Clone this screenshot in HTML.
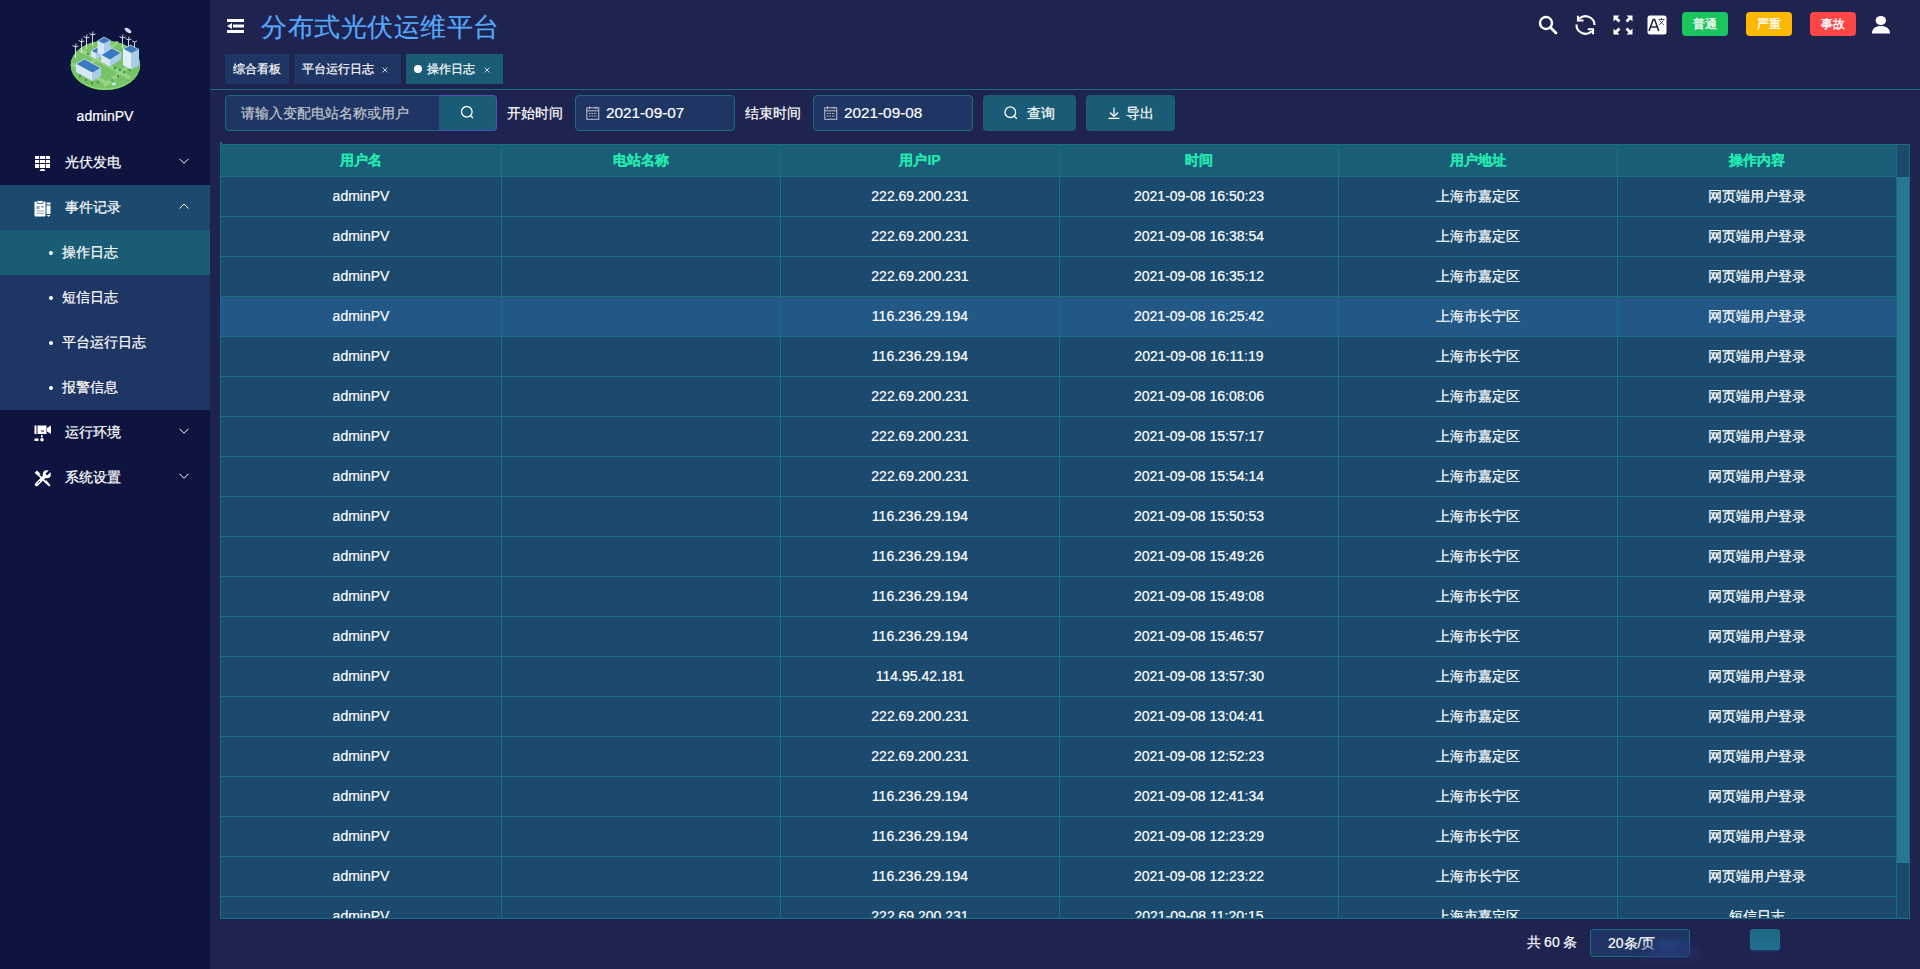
<!DOCTYPE html>
<html><head><meta charset="utf-8">
<style>
*{margin:0;padding:0;box-sizing:border-box}
html,body{width:1920px;height:969px;overflow:hidden;background:#1e2350;font-family:"Liberation Sans",sans-serif;color:#fff;-webkit-text-stroke:0.2px currentColor}
.a{position:absolute}
.side{position:absolute;left:0;top:0;width:210px;height:969px;background:#0e1440}
.uname{position:absolute;left:0;width:210px;top:106px;text-align:center;font-size:14px;line-height:20px}
.mi{position:absolute;left:0;width:210px;height:45px;font-size:14px;line-height:45px}
.mi .t{position:absolute;left:65px;top:0}
.mi svg{position:absolute}
.sub{position:absolute;left:0;width:210px;height:45px;font-size:14px;line-height:45px;background:#1f3564}
.sub .t{position:absolute;left:62px;top:0}
.sub .dot{position:absolute;left:49px;top:21px;width:4px;height:4px;border-radius:2px;background:#fff}
.title{position:absolute;left:261px;top:8.5px;font-size:26px;letter-spacing:0.5px;line-height:36px;color:#56a8f8}
.tab{position:absolute;top:54px;height:30px;line-height:30px;font-size:12px;background:#1f3564}
.tab.on{background:#1a5c75}
.tab span{position:absolute;top:0}
.hline{position:absolute;left:210px;top:89px;width:1710px;height:1px;background:#176e7d}
.inp{position:absolute;top:95px;height:36px;border:1px solid #176e7d;border-radius:4px;background:#1f3564;font-size:14px;line-height:34px}
.lbl{position:absolute;top:95px;line-height:36px;font-size:14px}
.btn{position:absolute;top:95px;height:36px;border-radius:4px;background:#1a5c75;font-size:14px;line-height:36px}
.tbl{position:absolute;left:220px;top:144px;width:1690px;height:775px;border:1px solid #176e7d;background:#1b4a6e;overflow:hidden}
.thead{position:absolute;left:0;top:0;width:1675px;height:32px;background:#195e76;border-bottom:1px solid #176e7d}
.th{position:absolute;top:0;height:31px;line-height:31px;text-align:center;color:#22e8b0;font-size:14px;font-weight:bold}
.row{position:absolute;left:0;width:1675px;height:40px;border-bottom:1px solid #176e7d}
.row.hl{background:#225786}
.td{position:absolute;top:0;height:39px;line-height:39px;text-align:center;font-size:14px;white-space:nowrap}
.vl{position:absolute;top:0;width:1px;height:775px;background:#176e7d}
.sbg{position:absolute;top:0;width:12px;height:775px;background:#1b4a6e}
.thumb{position:absolute;top:32px;width:12px;height:686px;background:#277792}
.badge{position:absolute;top:12px;width:46px;height:24px;border-radius:4px;font-size:12px;line-height:25px;-webkit-text-stroke:0.35px #fff;text-align:center;color:#fff}
</style></head><body>
<div class="side">
  <svg class="a" style="left:60px;top:20px" width="90" height="75" viewBox="0 0 90 75">
    <ellipse cx="45.4" cy="45.4" rx="34.8" ry="24.6" fill="#86e06e"/>
    <ellipse cx="45.4" cy="44.6" rx="34.6" ry="24" fill="#78c268"/>
    <path d="M12 44 L48 64 M20 30 L70 58 M58 22 L22 50 M44 66 L76 40" stroke="#98d487" stroke-width="3.2" fill="none"/>
    <g fill="#3f9a45"><circle cx="20" cy="56" r="1.3"/><circle cx="26" cy="60" r="1.3"/><circle cx="32" cy="63" r="1.3"/><circle cx="52" cy="60" r="1.3"/><circle cx="58" cy="56" r="1.3"/><circle cx="64" cy="52" r="1.3"/><circle cx="70" cy="50" r="1.3"/><circle cx="55" cy="48" r="1.3"/><circle cx="60" cy="50" r="1.3"/><circle cx="38" cy="62" r="1.2"/><circle cx="28" cy="34" r="1.2"/><circle cx="33" cy="36" r="1.2"/></g>
    <g stroke="#eef3f8" stroke-width="0.85" fill="none">
      <path d="M15.5 38 V27 M12.5 25.5 L15.5 27 L18.5 26 M15.5 27 L16 23.5"/>
      <path d="M21.5 33 V22 M18.5 20.5 L21.5 22 L24.5 21 M21.5 22 L22 18.5"/>
      <path d="M26.5 29 V18 M23.5 16.5 L26.5 18 L29.5 17 M26.5 18 L27 14.5"/>
      <path d="M32.5 26 V15 M29.5 13.5 L32.5 15 L35.5 14 M32.5 15 L33 11.5"/>
      <path d="M62.5 28 V18 M59.5 16.5 L62.5 18 L65.5 17 M62.5 18 L63 14.5"/>
      <path d="M68.5 29 V20 M65.5 18.5 L68.5 20 L71.5 19 M68.5 20 L69 16.5"/>
      <path d="M74.5 27 V22 M72 21 L74.5 22 L77 21"/>
    </g>
    <ellipse cx="68" cy="10.5" rx="3.8" ry="1.8" transform="rotate(35 68 10.5)" fill="#cfe4f7"/>
    <!-- building 3 small left -->
    <path d="M31 31 L37 27.5 L42 30 L36 33.5 Z" fill="#3a78c0" stroke="#fff" stroke-width="0.6"/>
    <path d="M31 31 L36 33.5 V39 L31 36.5 Z" fill="#d6e8f8"/><path d="M36 33.5 L42 30 V35.5 L36 39 Z" fill="#a8ccec"/>
    <!-- building 2 tall center -->
    <path d="M37.5 21 L44 17 L50.5 20.5 L44 24 Z" fill="#3a78c0" stroke="#fff" stroke-width="0.6"/>
    <path d="M37.5 21 L44 24 V36 L37.5 32.5 Z" fill="#d6e8f8"/><path d="M44 24 L50.5 20.5 V32.5 L44 36 Z" fill="#a8ccec"/>
    <!-- building 4 center-right wide -->
    <path d="M41 35 L52 28 L61 33 L50 40 Z" fill="#3a78c0" stroke="#fff" stroke-width="0.6"/>
    <path d="M41 35 L50 40 V46.5 L41 41.5 Z" fill="#d6e8f8"/><path d="M50 40 L61 33 V39.5 L50 46.5 Z" fill="#a8ccec"/>
    <!-- building 5 right tall -->
    <path d="M63 29 L70.5 25 L79 29.5 L71.5 33.5 Z" fill="#3a78c0" stroke="#fff" stroke-width="0.6"/>
    <path d="M63 29 L71.5 33.5 V49.5 L63 45 Z" fill="#e2eefa"/><path d="M71.5 33.5 L79 29.5 V45.5 L71.5 49.5 Z" fill="#a8ccec"/>
    <!-- building 1 bottom-left long -->
    <path d="M16 44 L24.5 39 L41 48 L32.5 53 Z" fill="#3a78c0" stroke="#fff" stroke-width="0.6"/>
    <path d="M16 44 L32.5 53 V61 L16 52 Z" fill="#d6e8f8"/><path d="M32.5 53 L41 48 V56 L32.5 61 Z" fill="#a8ccec"/>
    <ellipse cx="54" cy="64" rx="2.5" ry="1.3" fill="#bfe3f5"/>
  </svg>
  <div class="uname">adminPV</div>
  <div class="mi" style="top:140px">
    <svg style="left:35px;top:15px" width="16" height="17" viewBox="0 0 16 17" fill="#fff">
      <rect x="0" y="1" width="4" height="3"/><rect x="4.8" y="1" width="5.2" height="3"/><rect x="10.8" y="1" width="4.2" height="3"/>
      <rect x="0" y="5" width="4" height="3"/><rect x="4.8" y="5" width="5.2" height="3"/><rect x="10.8" y="5" width="4.2" height="3"/>
      <rect x="0" y="9" width="4" height="4"/><rect x="4.8" y="9" width="5.2" height="4"/><rect x="10.8" y="9" width="4.2" height="4"/>
      <path d="M6 14 H9 L10.5 16 H4.5 Z"/>
    </svg>
    <span class="t">光伏发电</span>
    <svg style="left:179px;top:18px" width="11" height="7" viewBox="0 0 11 7"><path d="M0.5 0.8 L5 5.3 L9.5 0.8" stroke="#fff" stroke-width="1" fill="none"/></svg>
  </div>
  <div class="mi" style="top:185px;background:#1b4a6e">
    <svg style="left:34px;top:15px" width="17" height="17" viewBox="0 0 17 17">
      <rect x="0.5" y="1.5" width="11" height="15" rx="1" fill="#fff"/>
      <rect x="3" y="0.5" width="6" height="3" rx="1" fill="#fff" stroke="#1b4a6e" stroke-width="0.8"/>
      <rect x="2.5" y="6" width="3" height="3" fill="#8aa6bf"/><rect x="7" y="6" width="3" height="1.5" fill="#8aa6bf"/>
      <rect x="2.5" y="10.5" width="7.5" height="1" fill="#8aa6bf"/><rect x="2.5" y="12.8" width="7.5" height="1" fill="#8aa6bf"/>
      <rect x="12.5" y="2.5" width="4" height="2" fill="#fff"/><rect x="12.5" y="5.5" width="4" height="8.5" fill="#fff"/><path d="M12.5 15 H16.5 L14.5 17 Z" fill="#fff"/>
    </svg>
    <span class="t">事件记录</span>
    <svg style="left:179px;top:18px" width="11" height="7" viewBox="0 0 11 7"><path d="M0.5 5.5 L5 1 L9.5 5.5" stroke="#fff" stroke-width="1" fill="none"/></svg>
  </div>
  <div class="sub" style="top:230px;background:#1a5c75"><span class="dot"></span><span class="t">操作日志</span></div>
  <div class="sub" style="top:275px"><span class="dot"></span><span class="t">短信日志</span></div>
  <div class="sub" style="top:320px"><span class="dot"></span><span class="t">平台运行日志</span></div>
  <div class="sub" style="top:365px"><span class="dot"></span><span class="t">报警信息</span></div>
  <div class="mi" style="top:410px">
    <svg style="left:34px;top:15px" width="18" height="17" viewBox="0 0 18 17" fill="#fff">
      <rect x="0.5" y="0.5" width="2" height="8.5"/><rect x="3.5" y="0.5" width="9" height="8.5"/><rect x="7" y="5.5" width="3" height="1" fill="#0e1440"/>
      <path d="M13 3 L17 0.5 V9 L13 6.5 Z"/>
      <rect x="7" y="10" width="1.6" height="2.5"/><rect x="0.5" y="13.5" width="4" height="2.5"/><circle cx="8" cy="14.8" r="1.8"/>
    </svg>
    <span class="t">运行环境</span>
    <svg style="left:179px;top:18px" width="11" height="7" viewBox="0 0 11 7"><path d="M0.5 0.8 L5 5.3 L9.5 0.8" stroke="#fff" stroke-width="1" fill="none"/></svg>
  </div>
  <div class="mi" style="top:455px">
    <svg style="left:34px;top:15px" width="17" height="17" viewBox="0 0 17 17" fill="#fff">
      <path d="M3 0.5 L6.5 4 L4.2 6.3 L0.7 2.8 Z"/>
      <path d="M5 5.3 L11.5 11.8" stroke="#fff" stroke-width="1.8"/>
      <path d="M10.3 12.3 L12.3 10.3 L16.5 15.2 L15.2 16.5 Z"/>
      <path d="M2.6 14.4 L11.8 5.2" stroke="#fff" stroke-width="3.6" stroke-linecap="round"/>
      <circle cx="12.8" cy="4.2" r="4"/>
      <path d="M12.3 4.7 L17 0" stroke="#0e1440" stroke-width="2.4"/>
      <path d="M3.6 13.4 L6 11" stroke="#0e1440" stroke-width="0.8"/>
    </svg>
    <span class="t">系统设置</span>
    <svg style="left:179px;top:18px" width="11" height="7" viewBox="0 0 11 7"><path d="M0.5 0.8 L5 5.3 L9.5 0.8" stroke="#fff" stroke-width="1" fill="none"/></svg>
  </div>
</div>

<svg class="a" style="left:227px;top:19px" width="17" height="14" viewBox="0 0 17 14" fill="#fff">
  <rect x="0" y="0" width="17" height="3"/><path d="M0 7 L5 4 V10 Z"/><rect x="6" y="5.5" width="11" height="3"/><rect x="0" y="11" width="17" height="3"/>
</svg>
<div class="title">分布式光伏运维平台</div>

<!-- right header icons -->
<svg class="a" style="left:1536px;top:14px" width="24" height="22" viewBox="0 0 24 22">
  <circle cx="10" cy="9" r="6" stroke="#fff" stroke-width="2.4" fill="none"/>
  <path d="M14.5 13.5 L20 19" stroke="#fff" stroke-width="2.8" stroke-linecap="round"/>
</svg>
<svg class="a" style="left:1574px;top:13px" width="24" height="24" viewBox="0 0 24 24" fill="none" stroke="#fff" stroke-width="2.1">
  <path d="M20.5 12 A9 9 0 0 0 5.2 5.8"/>
  <path d="M2.5 11.5 A9 9 0 0 0 17.8 18.2"/>
  <path d="M4 2.8 V7.5 H9.5"/>
  <path d="M13.8 16.3 H19 V21.3"/>
</svg>
<svg class="a" style="left:1613px;top:15px" width="20" height="20" viewBox="0 0 20 20" fill="#fff">
  <path d="M0.5 0.5 H6.5 L4.5 2.5 L7.5 5.5 L5.5 7.5 L2.5 4.5 L0.5 6.5 Z"/>
  <path d="M19.5 0.5 H13.5 L15.5 2.5 L12.5 5.5 L14.5 7.5 L17.5 4.5 L19.5 6.5 Z"/>
  <path d="M0.5 19.5 H6.5 L4.5 17.5 L7.5 14.5 L5.5 12.5 L2.5 15.5 L0.5 13.5 Z"/>
  <path d="M19.5 19.5 H13.5 L15.5 17.5 L12.5 14.5 L14.5 12.5 L17.5 15.5 L19.5 13.5 Z"/>
</svg>
<svg class="a" style="left:1647px;top:15px" width="20" height="20" viewBox="0 0 20 20">
  <rect x="0.5" y="0.5" width="19" height="19" rx="2.5" fill="#fff"/>
  <path d="M2 16 L6.2 4.5 H7.6 L11.8 16 M3.6 12 H10.2" stroke="#1e2350" stroke-width="1.6" fill="none"/>
  <path d="M11.5 4.5 H17.5 M14.5 3 V4.5 M12.5 5.5 L16.8 10 M16.5 5.5 L12.2 10" stroke="#1e2350" stroke-width="0.8" fill="none"/>
</svg>
<div class="badge" style="left:1682px;background:#1cc65f">普通</div>
<div class="badge" style="left:1746px;background:#ffb800">严重</div>
<div class="badge" style="left:1810px;background:#fd4646">事故</div>
<svg class="a" style="left:1871px;top:15px" width="20" height="20" viewBox="0 0 20 20" fill="#fff">
  <ellipse cx="9.8" cy="5.5" rx="5.2" ry="4.6"/>
  <path d="M1 18.5 C1 13 5 11 9.8 11 C14.6 11 19 13 19 18.5 Z"/>
</svg>

<div class="tab" style="left:225px;width:64px"><span style="left:8px">综合看板</span></div>
<div class="tab" style="left:294px;width:107px"><span style="left:8px">平台运行日志</span><svg class="a" style="left:88px;top:13px" width="6" height="6" viewBox="0 0 6 6" stroke="#dfe6ee" stroke-width="0.9"><path d="M0.6 0.6 L5.4 5.4 M5.4 0.6 L0.6 5.4"/></svg></div>
<div class="tab on" style="left:406px;width:97px"><span style="left:8px;top:11px;width:8px;height:8px;border-radius:4px;background:#fff"></span><span style="left:21px">操作日志</span><svg class="a" style="left:78px;top:13px" width="6" height="6" viewBox="0 0 6 6" stroke="#dfe6ee" stroke-width="0.9"><path d="M0.6 0.6 L5.4 5.4 M5.4 0.6 L0.6 5.4"/></svg></div>
<div class="hline"></div>

<div class="inp" style="left:225px;width:272px">
  <span class="a" style="left:15px;top:0;color:#c0c4cc">请输入变配电站名称或用户</span>
</div>
<div class="a" style="left:439px;top:95px;width:58px;height:36px;background:#1a5c75;border:1px solid #4656b8;border-left-color:#2a4f8a;border-radius:0 4px 4px 0"></div>
<svg class="a" style="left:460px;top:105px" width="14" height="14" viewBox="0 0 14 14" fill="none" stroke="#fff" stroke-width="1.3"><circle cx="6.8" cy="6.8" r="5.3"/><path d="M10.7 10.8 L13 13.1"/></svg>
<div class="lbl" style="left:507px">开始时间</div>
<div class="inp" style="left:575px;width:160px">
  <svg class="a" style="left:10px;top:10px" width="14" height="14" viewBox="0 0 14 14" fill="none" stroke="#c0c4cc" stroke-width="1"><rect x="0.8" y="1.8" width="12" height="11.5"/><path d="M0.8 4.8 H12.8 M3.5 0.5 V3 M10 0.5 V3"/><path d="M3 7.5 H11 M3 10 H11" stroke-dasharray="1.5 1"/></svg>
  <span class="a" style="left:30px;top:0;font-size:15.3px">2021-09-07</span>
</div>
<div class="lbl" style="left:745px">结束时间</div>
<div class="inp" style="left:813px;width:160px">
  <svg class="a" style="left:10px;top:10px" width="14" height="14" viewBox="0 0 14 14" fill="none" stroke="#c0c4cc" stroke-width="1"><rect x="0.8" y="1.8" width="12" height="11.5"/><path d="M0.8 4.8 H12.8 M3.5 0.5 V3 M10 0.5 V3"/><path d="M3 7.5 H11 M3 10 H11" stroke-dasharray="1.5 1"/></svg>
  <span class="a" style="left:30px;top:0;font-size:15.3px">2021-09-08</span>
</div>
<div class="btn" style="left:983px;width:93px">
  <svg class="a" style="left:21px;top:11px" width="14" height="14" viewBox="0 0 14 14" fill="none" stroke="#fff" stroke-width="1.3"><circle cx="6.3" cy="6.2" r="5.3"/><path d="M10.2 10.2 L12.8 12.8"/></svg>
  <span class="a" style="left:44px;top:0">查询</span>
</div>
<div class="btn" style="left:1086px;width:89px">
  <svg class="a" style="left:22px;top:12px" width="12" height="12" viewBox="0 0 12 12" fill="none" stroke="#fff" stroke-width="1.2"><path d="M6 0.5 V9 M2 5.5 L6 9.5 L10 5.5 M0.5 11.3 H11.5"/></svg>
  <span class="a" style="left:40px;top:0">导出</span>
</div>

<div class="a" style="left:220px;top:142px;width:2px;height:2px;background:#176e7d"></div>
<div class="tbl">
<div class="thead">
<div class="th" style="left:0px;width:280px">用户名</div>
<div class="th" style="left:281px;width:278px">电站名称</div>
<div class="th" style="left:560px;width:278px">用户IP</div>
<div class="th" style="left:839px;width:278px">时间</div>
<div class="th" style="left:1118px;width:278px">用户地址</div>
<div class="th" style="left:1397px;width:278px">操作内容</div>
</div>
<div class="row" style="top:32px">
<div class="td" style="left:0px;width:280px">adminPV</div>
<div class="td" style="left:560px;width:278px">222.69.200.231</div>
<div class="td" style="left:839px;width:278px">2021-09-08 16:50:23</div>
<div class="td" style="left:1118px;width:278px">上海市嘉定区</div>
<div class="td" style="left:1397px;width:278px">网页端用户登录</div>
</div>
<div class="row" style="top:72px">
<div class="td" style="left:0px;width:280px">adminPV</div>
<div class="td" style="left:560px;width:278px">222.69.200.231</div>
<div class="td" style="left:839px;width:278px">2021-09-08 16:38:54</div>
<div class="td" style="left:1118px;width:278px">上海市嘉定区</div>
<div class="td" style="left:1397px;width:278px">网页端用户登录</div>
</div>
<div class="row" style="top:112px">
<div class="td" style="left:0px;width:280px">adminPV</div>
<div class="td" style="left:560px;width:278px">222.69.200.231</div>
<div class="td" style="left:839px;width:278px">2021-09-08 16:35:12</div>
<div class="td" style="left:1118px;width:278px">上海市嘉定区</div>
<div class="td" style="left:1397px;width:278px">网页端用户登录</div>
</div>
<div class="row hl" style="top:152px">
<div class="td" style="left:0px;width:280px">adminPV</div>
<div class="td" style="left:560px;width:278px">116.236.29.194</div>
<div class="td" style="left:839px;width:278px">2021-09-08 16:25:42</div>
<div class="td" style="left:1118px;width:278px">上海市长宁区</div>
<div class="td" style="left:1397px;width:278px">网页端用户登录</div>
</div>
<div class="row" style="top:192px">
<div class="td" style="left:0px;width:280px">adminPV</div>
<div class="td" style="left:560px;width:278px">116.236.29.194</div>
<div class="td" style="left:839px;width:278px">2021-09-08 16:11:19</div>
<div class="td" style="left:1118px;width:278px">上海市长宁区</div>
<div class="td" style="left:1397px;width:278px">网页端用户登录</div>
</div>
<div class="row" style="top:232px">
<div class="td" style="left:0px;width:280px">adminPV</div>
<div class="td" style="left:560px;width:278px">222.69.200.231</div>
<div class="td" style="left:839px;width:278px">2021-09-08 16:08:06</div>
<div class="td" style="left:1118px;width:278px">上海市嘉定区</div>
<div class="td" style="left:1397px;width:278px">网页端用户登录</div>
</div>
<div class="row" style="top:272px">
<div class="td" style="left:0px;width:280px">adminPV</div>
<div class="td" style="left:560px;width:278px">222.69.200.231</div>
<div class="td" style="left:839px;width:278px">2021-09-08 15:57:17</div>
<div class="td" style="left:1118px;width:278px">上海市嘉定区</div>
<div class="td" style="left:1397px;width:278px">网页端用户登录</div>
</div>
<div class="row" style="top:312px">
<div class="td" style="left:0px;width:280px">adminPV</div>
<div class="td" style="left:560px;width:278px">222.69.200.231</div>
<div class="td" style="left:839px;width:278px">2021-09-08 15:54:14</div>
<div class="td" style="left:1118px;width:278px">上海市嘉定区</div>
<div class="td" style="left:1397px;width:278px">网页端用户登录</div>
</div>
<div class="row" style="top:352px">
<div class="td" style="left:0px;width:280px">adminPV</div>
<div class="td" style="left:560px;width:278px">116.236.29.194</div>
<div class="td" style="left:839px;width:278px">2021-09-08 15:50:53</div>
<div class="td" style="left:1118px;width:278px">上海市长宁区</div>
<div class="td" style="left:1397px;width:278px">网页端用户登录</div>
</div>
<div class="row" style="top:392px">
<div class="td" style="left:0px;width:280px">adminPV</div>
<div class="td" style="left:560px;width:278px">116.236.29.194</div>
<div class="td" style="left:839px;width:278px">2021-09-08 15:49:26</div>
<div class="td" style="left:1118px;width:278px">上海市长宁区</div>
<div class="td" style="left:1397px;width:278px">网页端用户登录</div>
</div>
<div class="row" style="top:432px">
<div class="td" style="left:0px;width:280px">adminPV</div>
<div class="td" style="left:560px;width:278px">116.236.29.194</div>
<div class="td" style="left:839px;width:278px">2021-09-08 15:49:08</div>
<div class="td" style="left:1118px;width:278px">上海市长宁区</div>
<div class="td" style="left:1397px;width:278px">网页端用户登录</div>
</div>
<div class="row" style="top:472px">
<div class="td" style="left:0px;width:280px">adminPV</div>
<div class="td" style="left:560px;width:278px">116.236.29.194</div>
<div class="td" style="left:839px;width:278px">2021-09-08 15:46:57</div>
<div class="td" style="left:1118px;width:278px">上海市长宁区</div>
<div class="td" style="left:1397px;width:278px">网页端用户登录</div>
</div>
<div class="row" style="top:512px">
<div class="td" style="left:0px;width:280px">adminPV</div>
<div class="td" style="left:560px;width:278px">114.95.42.181</div>
<div class="td" style="left:839px;width:278px">2021-09-08 13:57:30</div>
<div class="td" style="left:1118px;width:278px">上海市嘉定区</div>
<div class="td" style="left:1397px;width:278px">网页端用户登录</div>
</div>
<div class="row" style="top:552px">
<div class="td" style="left:0px;width:280px">adminPV</div>
<div class="td" style="left:560px;width:278px">222.69.200.231</div>
<div class="td" style="left:839px;width:278px">2021-09-08 13:04:41</div>
<div class="td" style="left:1118px;width:278px">上海市嘉定区</div>
<div class="td" style="left:1397px;width:278px">网页端用户登录</div>
</div>
<div class="row" style="top:592px">
<div class="td" style="left:0px;width:280px">adminPV</div>
<div class="td" style="left:560px;width:278px">222.69.200.231</div>
<div class="td" style="left:839px;width:278px">2021-09-08 12:52:23</div>
<div class="td" style="left:1118px;width:278px">上海市嘉定区</div>
<div class="td" style="left:1397px;width:278px">网页端用户登录</div>
</div>
<div class="row" style="top:632px">
<div class="td" style="left:0px;width:280px">adminPV</div>
<div class="td" style="left:560px;width:278px">116.236.29.194</div>
<div class="td" style="left:839px;width:278px">2021-09-08 12:41:34</div>
<div class="td" style="left:1118px;width:278px">上海市长宁区</div>
<div class="td" style="left:1397px;width:278px">网页端用户登录</div>
</div>
<div class="row" style="top:672px">
<div class="td" style="left:0px;width:280px">adminPV</div>
<div class="td" style="left:560px;width:278px">116.236.29.194</div>
<div class="td" style="left:839px;width:278px">2021-09-08 12:23:29</div>
<div class="td" style="left:1118px;width:278px">上海市长宁区</div>
<div class="td" style="left:1397px;width:278px">网页端用户登录</div>
</div>
<div class="row" style="top:712px">
<div class="td" style="left:0px;width:280px">adminPV</div>
<div class="td" style="left:560px;width:278px">116.236.29.194</div>
<div class="td" style="left:839px;width:278px">2021-09-08 12:23:22</div>
<div class="td" style="left:1118px;width:278px">上海市长宁区</div>
<div class="td" style="left:1397px;width:278px">网页端用户登录</div>
</div>
<div class="row" style="top:752px">
<div class="td" style="left:0px;width:280px">adminPV</div>
<div class="td" style="left:560px;width:278px">222.69.200.231</div>
<div class="td" style="left:839px;width:278px">2021-09-08 11:20:15</div>
<div class="td" style="left:1118px;width:278px">上海市嘉定区</div>
<div class="td" style="left:1397px;width:278px">短信日志</div>
</div>
<div class="vl" style="left:280px"></div>
<div class="vl" style="left:559px"></div>
<div class="vl" style="left:838px"></div>
<div class="vl" style="left:1117px"></div>
<div class="vl" style="left:1396px"></div>
<div class="vl" style="left:1675px"></div>
<div class="sbg" style="left:1676px"></div>
<div class="thumb" style="left:1676px"></div>
</div>

<div class="a" style="left:1527px;top:932px;font-size:14px;line-height:20px;word-spacing:-0.8px">共 60 条</div>
<div class="a" style="left:1590px;top:929px;width:100px;height:28px;border:1px solid #176e7d;border-radius:3px;background:#1f3564;font-size:14px;line-height:26px;overflow:hidden"><span class="a" style="left:17px;top:0">20条/页</span>
<div class="a" style="left:56px;top:10px;width:44px;height:17px;background:linear-gradient(90deg,rgba(31,53,100,0),rgba(36,70,130,0.85) 40%,rgba(30,60,120,0.6));filter:blur(1.5px)"></div></div>
<div class="a" style="left:1640px;top:946px;width:60px;height:14px;background:rgba(40,50,110,0.5);filter:blur(3px)"></div>
<div class="a" style="left:1750px;top:929px;width:30px;height:21px;border-radius:3px;background:linear-gradient(180deg,#1d6a82,#236f8f);box-shadow:0 2px 3px rgba(40,60,120,0.6)"></div>
</body></html>
